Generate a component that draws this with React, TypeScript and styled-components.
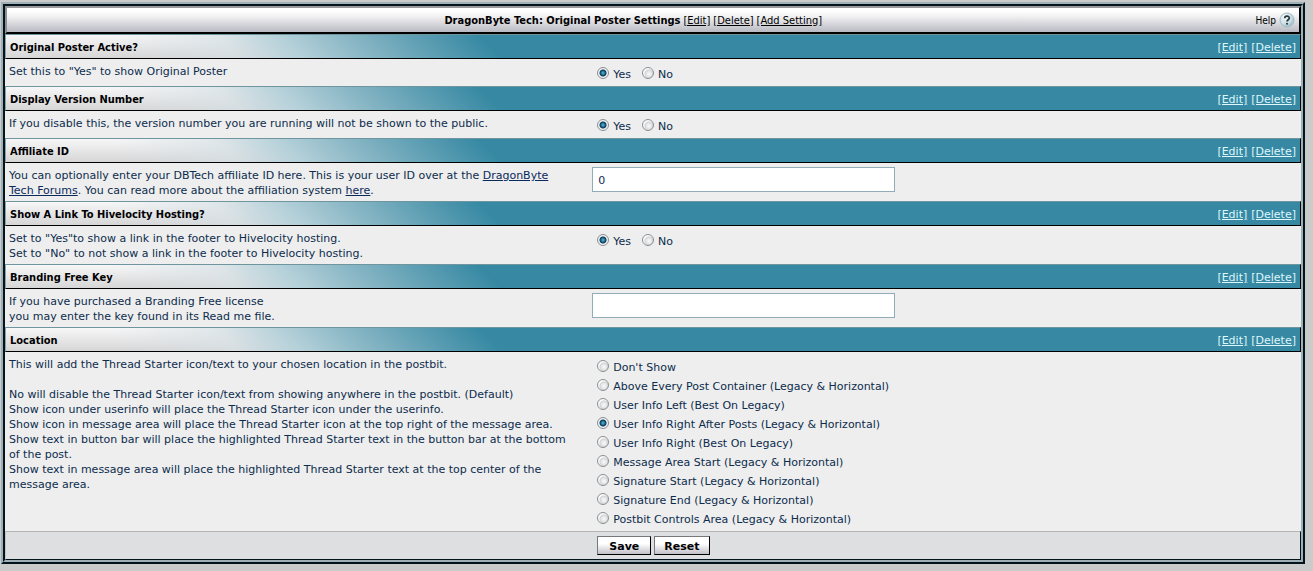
import React from 'react';
import styled, { createGlobalStyle } from 'styled-components';

const verdana = 'Verdana, "DejaVu Sans", sans-serif';
const tahoma = 'Tahoma, "DejaVu Sans Condensed", "DejaVu Sans", sans-serif';
const navy = '#0c2c4c';

const Global = createGlobalStyle`
  * { box-sizing: border-box; }
  body {
    margin: 0;
    padding: 2px 8px 8px 1px;
    background: #cbcbcb;
    color: ${navy};
    font: 11px/15px ${verdana};
  }
`;

const Frame = styled.form`
  margin: 0;
  border: 2px solid;
  border-color: #9fb1b7 #03141c #03141c #9fb1b7;
`;

const Inner = styled.div`
  border: 2px solid;
  border-color: #03141c #9fb1b7 #9fb1b7 #03141c;
`;

const TitleBar = styled.header`
  display: flex;
  align-items: center;
  height: 28px;
  padding: 0 4px;
  border: 2px solid;
  border-color: #9a9a9e #000 #000 #8f8f93;
  background: linear-gradient(#fff 10%, #f1f1f3 35%, #b9b9c2);
  color: #000;
  font-family: ${tahoma};
`;

const Title = styled.div`
  flex: 1;
  text-align: center;
`;

const TitleText = styled.h1`
  display: inline;
  margin: 0;
  font-size: 11px;
`;

const TitleLink = styled.a`
  margin-left: 3px;
  color: #000;
`;

const Help = styled.button`
  display: flex;
  align-items: center;
  gap: 3px;
  padding: 0;
  border: 0;
  background: none;
  color: #000;
  font: 10px/15px ${tahoma};
`;

const SectionHead = styled.div`
  display: flex;
  align-items: center;
  justify-content: space-between;
  height: 25px;
  padding: 1px 4px 0;
  border: 1px solid;
  border-color: #6f959f #000 #000 #8aa3aa;
  background:
    linear-gradient(
      45deg,
      rgba(222, 224, 225, 0) 90px,
      rgba(214, 224, 228, 0.7) 165px,
      #b4d0d9 210px,
      #8fbac8 250px,
      #62a1b5 300px,
      #3789a3 350px
    ),
    linear-gradient(#f7f7f8, #d6d6d7);
`;

const SectionTitle = styled.h2`
  margin: 0;
  color: #000;
  font: bold 11px/15px ${tahoma};
`;

const Actions = styled.div`
  display: flex;
  gap: 4px;
`;

const ActionLink = styled.a`
  color: #dff6fb;
`;

const SectionBody = styled.div`
  display: grid;
  grid-template-columns: 45% 1fr;
  background: #eee;
`;

const Description = styled.div`
  padding: 5px 4px 3px;
`;

const Control = styled.div`
  padding: 4px;
`;

const TextLink = styled.a`
  color: #0a2a5c;
`;

const Options = styled.div<{ $stacked?: boolean }>`
  display: flex;
  flex-direction: ${p => (p.$stacked ? 'column' : 'row')};
  column-gap: 11px;
  padding-left: 5px;
`;

const Option = styled.label`
  display: flex;
  gap: 4px;
  height: 19px;
  line-height: 24px;
`;

const Radio = styled.input`
  appearance: none;
  flex: none;
  width: 12px;
  height: 12px;
  margin: 4px 0 0;
  border: 1px solid #8b8f92;
  border-radius: 50%;
  background: radial-gradient(circle at 60% 60%, #fafafa 0, #e2e3e4 3px, #cfd1d2 4px, #fafafa 5px);
  &:checked {
    background: radial-gradient(circle at 50% 50%, #5fb4d8 0, #1b6d93 2px, #0c3550 3px, #f0f3f4 4px);
  }
`;

const TextBox = styled.input`
  display: block;
  width: 303px;
  max-width: 100%;
  height: 25px;
  padding: 1px 5px 0;
  border: 1px solid #8facb8;
  background: #fff;
  color: ${navy};
  font: 11px/15px ${verdana};
`;

const Footer = styled.footer`
  display: grid;
  grid-template-columns: 45% 1fr;
  height: 29px;
  border: 1px solid;
  border-color: #b3b5b8 #03141c #03141c #c3c7ca;
  background: #dedfe1;
`;

const Buttons = styled.div`
  grid-column: 2;
  display: flex;
  gap: 3px;
  padding: 4px 9px;
`;

const Button = styled.button`
  min-width: 54px;
  height: 19px;
  padding: 1px 9px 0;
  border: 1px solid;
  border-color: #77777c #000 #000 #77777c;
  background: linear-gradient(#fff 40%, #c0c0c8);
  color: #000;
  font: bold 11px/15px ${verdana};
`;

const HelpIcon = () => (
  <svg width="16" height="16" viewBox="0 0 16 16" aria-hidden="true">
    <defs>
      <radialGradient id="helpFill" cx="0.35" cy="0.3" r="0.8">
        <stop offset="0" stopColor="#f4fafb" />
        <stop offset="0.6" stopColor="#c9dde3" />
        <stop offset="1" stopColor="#8fb3be" />
      </radialGradient>
    </defs>
    <circle cx="8" cy="8" r="7" fill="url(#helpFill)" stroke="#a3bdc5" />
    <path d="M5.7 6.2C5.7 3.5 10.3 3.5 10.3 6C10.3 7.7 8 7.8 8 9.6" fill="none" stroke="#26363c" strokeWidth="1.7" />
    <circle cx="8" cy="11.8" r="1" fill="#26363c" />
  </svg>
);

interface ChoiceProps {
  name: string;
  options: string[];
  selected: number;
  stacked?: boolean;
}

const Choices = ({ name, options, selected, stacked }: ChoiceProps) => (
  <Options $stacked={stacked} role="radiogroup" aria-label={name}>
    {options.map((label, i) => (
      <Option key={label}>
        <Radio type="radio" name={name} defaultChecked={i === selected} />
        {label}
      </Option>
    ))}
  </Options>
);

interface SectionProps {
  title: string;
  control: React.ReactNode;
  children: React.ReactNode;
}

const Section = ({ title, control, children }: SectionProps) => (
  <section>
    <SectionHead>
      <SectionTitle>{title}</SectionTitle>
      <Actions>
        <ActionLink href="#edit">[Edit]</ActionLink>
        <ActionLink href="#delete">[Delete]</ActionLink>
      </Actions>
    </SectionHead>
    <SectionBody>
      <Description>{children}</Description>
      <Control>{control}</Control>
    </SectionBody>
  </section>
);

const yesNo = ['Yes', 'No'];
const locations = [
  "Don't Show",
  'Above Every Post Container (Legacy & Horizontal)',
  'User Info Left (Best On Legacy)',
  'User Info Right After Posts (Legacy & Horizontal)',
  'User Info Right (Best On Legacy)',
  'Message Area Start (Legacy & Horizontal)',
  'Signature Start (Legacy & Horizontal)',
  'Signature End (Legacy & Horizontal)',
  'Postbit Controls Area (Legacy & Horizontal)',
];

export default function App() {
  return (
    <>
      <Global />
      <Frame>
        <Inner>
          <TitleBar>
            <Title>
              <TitleText>DragonByte Tech: Original Poster Settings</TitleText>
              <TitleLink href="#edit">[Edit]</TitleLink>
              <TitleLink href="#delete">[Delete]</TitleLink>
              <TitleLink href="#add">[Add Setting]</TitleLink>
            </Title>
            <Help type="button">
              Help <HelpIcon />
            </Help>
          </TitleBar>
          <Section title="Original Poster Active?" control={<Choices name="active" options={yesNo} selected={0} />}>
            Set this to "Yes" to show Original Poster
          </Section>
          <Section title="Display Version Number" control={<Choices name="version" options={yesNo} selected={0} />}>
            If you disable this, the version number you are running will not be shown to the public.
          </Section>
          <Section title="Affiliate ID" control={<TextBox aria-label="Affiliate ID" defaultValue="0" />}>
            You can optionally enter your DBTech affiliate ID here. This is your user ID over at the{' '}
            <TextLink href="#forums">
              DragonByte
              <br />
              Tech Forums
            </TextLink>
            . You can read more about the affiliation system <TextLink href="#affiliates">here</TextLink>.
          </Section>
          <Section title="Show A Link To Hivelocity Hosting?" control={<Choices name="hosting" options={yesNo} selected={0} />}>
            Set to "Yes"to show a link in the footer to Hivelocity hosting.
            <br />
            Set to "No" to not show a link in the footer to Hivelocity hosting.
          </Section>
          <Section title="Branding Free Key" control={<TextBox aria-label="Branding Free Key" />}>
            If you have purchased a Branding Free license
            <br />
            you may enter the key found in its Read me file.
          </Section>
          <Section title="Location" control={<Choices name="location" options={locations} selected={3} stacked />}>
            This will add the Thread Starter icon/text to your chosen location in the postbit.
            <br />
            <br />
            No will disable the Thread Starter icon/text from showing anywhere in the postbit. (Default)
            <br />
            Show icon under userinfo will place the Thread Starter icon under the userinfo.
            <br />
            Show icon in message area will place the Thread Starter icon at the top right of the message area.
            <br />
            Show text in button bar will place the highlighted Thread Starter text in the button bar at the bottom
            <br />
            of the post.
            <br />
            Show text in message area will place the highlighted Thread Starter text at the top center of the
            <br />
            message area.
          </Section>
          <Footer>
            <Buttons>
              <Button type="submit">Save</Button>
              <Button type="reset">Reset</Button>
            </Buttons>
          </Footer>
        </Inner>
      </Frame>
    </>
  );
}
